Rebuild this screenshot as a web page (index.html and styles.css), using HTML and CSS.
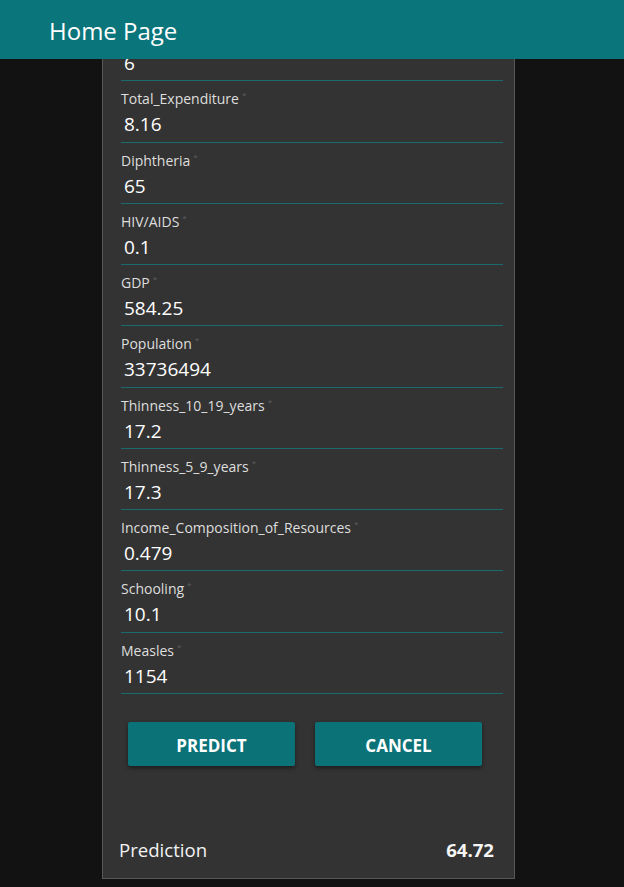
FILE: index.html
```html
<!DOCTYPE html>
<html lang="en">
<head>
<meta charset="utf-8">
<title>Home Page</title>
<link rel="stylesheet" href="styles.css">
</head>
<body>
<header class="header">Home Page</header>
<main class="panel">
  <form class="form">
    <div class="field"><div class="label"></div><div class="value">6</div></div>
    <div class="field"><label class="label">Total_Expenditure<span class="req">*</span></label><div class="value">8.16</div></div>
    <div class="field"><label class="label">Diphtheria<span class="req">*</span></label><div class="value">65</div></div>
    <div class="field"><label class="label">HIV/AIDS<span class="req">*</span></label><div class="value">0.1</div></div>
    <div class="field"><label class="label">GDP<span class="req">*</span></label><div class="value">584.25</div></div>
    <div class="field"><label class="label">Population<span class="req">*</span></label><div class="value">33736494</div></div>
    <div class="field"><label class="label">Thinness_10_19_years<span class="req">*</span></label><div class="value">17.2</div></div>
    <div class="field"><label class="label">Thinness_5_9_years<span class="req">*</span></label><div class="value">17.3</div></div>
    <div class="field"><label class="label">Income_Composition_of_Resources<span class="req">*</span></label><div class="value">0.479</div></div>
    <div class="field"><label class="label">Schooling<span class="req">*</span></label><div class="value">10.1</div></div>
    <div class="field"><label class="label">Measles<span class="req">*</span></label><div class="value">1154</div></div>
    <div class="buttons">
      <button type="button" class="btn">PREDICT</button>
      <button type="button" class="btn">CANCEL</button>
    </div>
  </form>
  <div class="result">
    <span class="result-label">Prediction</span>
    <span class="result-value">64.72</span>
  </div>
</main>
</body>
</html>
```
FILE: styles.css
```css
html, body {
  margin: 0;
  padding: 0;
}
body {
  background: #121212;
  font-family: "Open Sans", "Noto Sans", sans-serif;
  color: #fff;
  height: 887px;
  overflow: hidden;
}
.header {
  position: fixed;
  top: 0;
  left: 0;
  right: 0;
  height: 59px;
  background: #0a757a;
  color: #fff;
  font-size: 24px;
  line-height: 61px;
  padding-left: 49px;
  z-index: 2;
}
.panel {
  margin-left: 102px;
  width: 411px;
  background: #333333;
  border: 1px solid #575757;
  border-top: none;
  box-sizing: content-box;
}
.form {
  padding: 20px 11px 0 18px;
  margin: 0;
}
.field {
  height: 61.25px;
  box-sizing: border-box;
  border-bottom: 1px solid #1a6b6d;
  display: flex;
  flex-direction: column;
}
.label {
  margin-top: 3px;
  height: 21px;
  line-height: 21px;
  font-size: 14px;
  color: #dedede;
}
.req {
  font-size: 8px;
  color: #5e5e5e;
  vertical-align: 6px;
  margin-left: 3px;
}
.value {
  margin-top: 6px;
  padding-left: 3px;
  line-height: 26px;
  font-size: 19px;
  color: #fff;
}
.buttons {
  display: flex;
  gap: 20px;
  margin: 28px 0 0 7px;
}
.btn {
  width: 167px;
  height: 44px;
  border: none;
  border-radius: 2px;
  background: #0b7377;
  color: #fff;
  font-family: "Open Sans", "Noto Sans", sans-serif;
  font-weight: 700;
  font-size: 17px;
  box-shadow: 0 2px 4px rgba(0, 0, 0, 0.45);
  padding: 3px 0 0 0;
}
.result {
  display: flex;
  justify-content: space-between;
  align-items: center;
  margin-top: 71px;
  padding: 0 20px 15px 16px;
  line-height: 26px;
  font-size: 18.6px;
}
.result-label {
  color: #f2f2f2;
}
.result-value {
  font-weight: 700;
  color: #f5f5f5;
}
```
